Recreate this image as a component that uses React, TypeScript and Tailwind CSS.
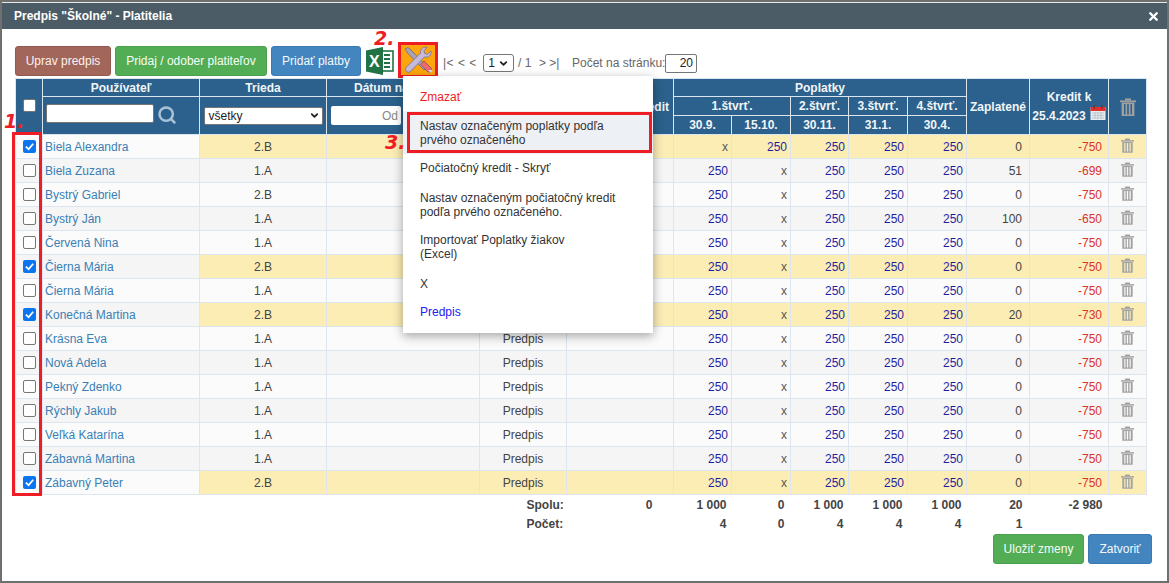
import { ChevronDown, Search, X } from "lucide-react";

type Row = {
  name: string;
  cls: string;
  checked?: boolean;
  first: string;
  second: string;
  paid: number;
  credit: number;
};

const rows: Row[] = [
  { name: "Biela Alexandra", cls: "2.B", checked: true, first: "x", second: "250", paid: 0, credit: -750 },
  { name: "Biela Zuzana", cls: "1.A", first: "250", second: "x", paid: 51, credit: -699 },
  { name: "Bystrý Gabriel", cls: "2.B", first: "250", second: "x", paid: 0, credit: -750 },
  { name: "Bystrý Ján", cls: "1.A", first: "250", second: "x", paid: 100, credit: -650 },
  { name: "Červená Nina", cls: "1.A", first: "250", second: "x", paid: 0, credit: -750 },
  { name: "Čierna Mária", cls: "2.B", checked: true, first: "250", second: "x", paid: 0, credit: -750 },
  { name: "Čierna Mária", cls: "1.A", first: "250", second: "x", paid: 0, credit: -750 },
  { name: "Konečná Martina", cls: "2.B", checked: true, first: "250", second: "x", paid: 20, credit: -730 },
  { name: "Krásna Eva", cls: "1.A", first: "250", second: "x", paid: 0, credit: -750 },
  { name: "Nová Adela", cls: "1.A", first: "250", second: "x", paid: 0, credit: -750 },
  { name: "Pekný Zdenko", cls: "1.A", first: "250", second: "x", paid: 0, credit: -750 },
  { name: "Rýchly Jakub", cls: "1.A", first: "250", second: "x", paid: 0, credit: -750 },
  { name: "Veľká Katarína", cls: "1.A", first: "250", second: "x", paid: 0, credit: -750 },
  { name: "Zábavná Martina", cls: "1.A", first: "250", second: "x", paid: 0, credit: -750 },
  { name: "Zábavný Peter", cls: "2.B", checked: true, first: "250", second: "x", paid: 0, credit: -750 },
];

const widths = [27, 157, 127, 153, 87, 107, 58, 59, 58, 59, 59, 63, 79, 38];

const th = "border border-[#dbe5ee] bg-[#2b618c] text-center align-middle font-bold leading-[16px] text-[#f2f5f7] p-0";
const td = "border border-[#dde6ee] px-[5px] p-0 h-6";

function TrashIcon({ className }: { className: string }) {
  return (
    <svg viewBox="0 0 16 18" className={className} fill="currentColor">
      <rect x="0" y="2.4" width="16" height="1.8" />
      <rect x="5" y="0.4" width="6" height="2" />
      <path d="M1.6 4.6h12.800V18H1.600zM4 6v10.400h1.500V6zM7.200 6v10.400h1.600V6zM10.500 6v10.400H12V6z" fillRule="evenodd" />
    </svg>
  );
}

function CalendarIcon() {
  return (
    <svg viewBox="0 0 16 15" className="-mt-[8px] h-[15px] w-4 shrink-0">
      <rect x="0.5" y="2" width="15" height="13" fill="#e6ecef" />
      <rect x="0.5" y="2" width="15" height="4" fill="#e0322a" />
      <rect x="3.5" y="0" width="1.2" height="4" fill="#7a2a2a" />
      <rect x="11.3" y="0" width="1.2" height="4" fill="#7a2a2a" />
      <path d="M2 8h12M2 10.500h12M2 13h12M5 7v7M8 7v7M11 7v7" stroke="#aebcc4" strokeWidth="0.7" />
    </svg>
  );
}

function ExcelIcon() {
  return (
    <svg viewBox="0 0 28 28" className="h-7 w-7">
      <rect x="12" y="4" width="15" height="20" fill="#fff" stroke="#217346" strokeWidth="1.6" />
      <path d="M18 8h6M18 12h6M18 16h6M18 20h6" stroke="#217346" strokeWidth="2" />
      <path d="M0 3.500 17 0v28L0 24.500z" fill="#217346" />
      <text x="3" y="20" fontSize="16" fontWeight="bold" fill="#fff" fontFamily="Liberation Sans, sans-serif">X</text>
    </svg>
  );
}

function ToolsIcon() {
  return (
    <svg viewBox="0 0 32 28" className="h-7 w-8">
      <path d="M3 3 6 1.500 9 4l16 17-3 3L6 7.500z" fill="#a9a3b8" stroke="#6f6a82" strokeWidth="0.8" />
      <path d="M25 1.500c-3-1-7 1-6.500 5.500L4 21.500a3 3 0 0 0 4.200 4.200L22.500 11c4 1 7.500-2 6.500-6l-3.500 3.300-3-1L22 4.500z" fill="#c8b9da" stroke="#7d7590" strokeWidth="0.9" />
      <path d="m18.500 18.500 3.500-3.500 7 7a2.500 2.500 0 0 1-3.500 3.500z" fill="#ee6a70" stroke="#8d4a5a" strokeWidth="0.8" />
      <path d="m26 24 5 0-2.500 3z" fill="#d5d9e2" />
    </svg>
  );
}

function Check({ checked }: { checked?: boolean }) {
  return (
    <div
      className={
        checked
          ? "mx-auto flex h-[13px] w-[13px] items-center justify-center rounded-[2px] bg-[#0a75f0]"
          : "mx-auto h-[13px] w-[13px] rounded-[2px] border border-[#767676] bg-white"
      }
    >
      {checked && (
        <svg viewBox="0 0 12 12" className="h-[11px] w-[11px]">
          <path d="M2 6.200 5 9l5-6" fill="none" stroke="#fff" strokeWidth="2" />
        </svg>
      )}
    </div>
  );
}

function Amount({ value, bg }: { value: string; bg: string }) {
  return (
    <td className={`${td} ${bg} pr-[3px] text-right ${value === "x" ? "text-[#555]" : "text-[#1f1f9e]"}`}>{value}</td>
  );
}

function MenuItem({ children, color = "text-[#333]", extra = "" }: { children: React.ReactNode; color?: string; extra?: string }) {
  return <div className={`px-[17px] py-[7px] leading-[14px] ${color} ${extra}`}>{children}</div>;
}

function Mark({ text, className }: { text: string; className: string }) {
  return (
    <span className={`absolute text-[19px] leading-none font-bold italic text-[#ee1c25] font-['DejaVu_Sans',sans-serif] ${className}`}>
      {text}
    </span>
  );
}

export default function App() {
  return (
    <div className="h-[583px] w-[1169px] overflow-hidden bg-[#6f6f6f] p-[2px] font-['Liberation_Sans',Arial,sans-serif] text-[12px] text-[#444]">
      <div className="relative flex h-[579px] flex-col bg-white">
        <div className="h-[1px] shrink-0 bg-[#e8e8e8]" />
        <div className="flex h-[26px] shrink-0 items-center justify-between bg-[#4b5c66] pr-[7px] pl-[12px] text-[12px] font-bold text-white">
          <span>Predpis "Školné" - Platitelia</span>
          <X className="h-[13px] w-[13px]" strokeWidth={4.5} />
        </div>

        <div className="flex flex-1 flex-col pt-[17px] pr-[15px] pl-[13px]">
          <div className="flex h-[30px] items-center">
            <button className="h-[30px] w-[96px] rounded-[3px] border border-[#94594e] bg-[#a3665a] text-[#f9f2ef]">Uprav predpis</button>
            <button className="ml-1 h-[30px] w-[152px] rounded-[3px] border border-[#4aa14d] bg-[#52ad55] text-[#f7fcf7]">Pridaj / odober platiteľov</button>
            <button className="ml-1 h-[30px] w-[90px] rounded-[3px] border border-[#3a7ab2] bg-[#4285bf] text-[#f5f9fd]">Pridať platby</button>
            <div className="ml-[5px]"><ExcelIcon /></div>
            <div className="-mt-[2px] ml-1 flex h-9 w-10 items-center justify-center border-[3px] border-[#ee1c25] bg-[#fca60b]">
              <ToolsIcon />
            </div>
            <div className="mt-[4px] ml-[5px] flex items-center whitespace-nowrap text-[#666]">
              <span className="w-[35px] tracking-[0.5px]">|&lt; &lt; &lt;</span>
              <div className="ml-[5px] flex h-[18px] w-[31px] items-center justify-center gap-[3px] rounded-[3px] border border-[#767676] text-[#222]">
                1<ChevronDown className="h-[11px] w-[11px]" strokeWidth={4} />
              </div>
              <span className="ml-[4px] w-[13px]">/ 1</span>
              <span className="ml-[8px] w-[20px]">&gt; &gt;|</span>
              <span className="ml-[13px] w-[93px]">Počet na stránku:</span>
              <div className="flex h-[19px] w-[32px] items-center justify-end rounded-[2px] border border-[#767676] pr-[3px] text-[#222]">20</div>
            </div>
          </div>

          <table className="mt-[2px] w-[1131px] table-fixed border-collapse">
            <colgroup>
              {widths.map((w, i) => (
                <col key={i} style={{ width: w }} />
              ))}
            </colgroup>
            <thead>
              <tr className="h-[18px]">
                <th rowSpan={3} className={th}>
                  <div className="-mt-[3px]"><Check /></div>
                </th>
                <th className={th}>Používateľ</th>
                <th className={th}>Trieda</th>
                <th className={th}>Dátum narodenia</th>
                <th className={th}></th>
                <th rowSpan={3} className={`${th} pr-[4px] text-right`}>Počiat. kredit</th>
                <th colSpan={5} className={th}>Poplatky</th>
                <th rowSpan={3} className={th}>Zaplatené</th>
                <th rowSpan={3} className={th}>
                  <div className="leading-[19px]">Kredit k</div>
                  <div className="flex items-center justify-center gap-[4px] leading-[19px]">25.4.2023<CalendarIcon /></div>
                </th>
                <th rowSpan={3} className={th}>
                  <TrashIcon className="mx-auto h-[18px] w-4 text-[#a0a0a0]" />
                </th>
              </tr>
              <tr className="h-[19px]">
                <th rowSpan={2} className={th}>
                  <div className="-mt-[5px] flex items-center gap-[3px] pl-[3px]">
                    <div className="h-[19px] w-[108px] rounded-[2px] border border-[#767676] bg-white" />
                    <Search className="mt-[3px] h-5 w-5 text-[#a9c2d6]" strokeWidth={3} />
                  </div>
                </th>
                <th rowSpan={2} className={th}>
                  <div className="mx-auto flex h-[18px] w-[119px] items-center justify-between rounded-[2px] border border-[#767676] bg-white pr-[2px] pl-1 font-normal text-[#222]">
                    všetky<ChevronDown className="h-[11px] w-[11px]" strokeWidth={4} />
                  </div>
                </th>
                <th rowSpan={2} className={th}>
                  <div className="ml-[4px] flex h-[19px] w-[70px] items-center justify-end rounded-[2px] bg-white pr-[3px] font-normal text-[#888]">Od</div>
                </th>
                <th rowSpan={2} className={th}></th>
                <th colSpan={2} className={th}>1.štvrť.</th>
                <th className={th}>2.štvrť.</th>
                <th className={th}>3.štvrť.</th>
                <th className={th}>4.štvrť.</th>
              </tr>
              <tr className="h-[19px]">
                <th className={th}>30.9.</th>
                <th className={th}>15.10.</th>
                <th className={th}>30.11.</th>
                <th className={th}>31.1.</th>
                <th className={th}>30.4.</th>
              </tr>
            </thead>
            <tbody>
              {rows.map((r, i) => {
                const base = i % 2 === 0 ? "bg-[#fbfbfb]" : "bg-[#f5f5f5]";
                const bg = r.checked ? "bg-[#fcedb5]" : base;
                return (
                  <tr key={i} className="h-6">
                    <td className={`${td} ${base}`}><Check checked={r.checked} /></td>
                    <td className={`${td} ${base} text-[#3a7fb5]`}>
                      <span className="-ml-[3px]">{r.name}</span>
                    </td>
                    <td className={`${td} ${bg} text-center`}>{r.cls}</td>
                    <td className={`${td} ${bg}`}></td>
                    <td className={`${td} ${bg} text-center`}>{(i >= 8) && "Predpis"}</td>
                    <td className={`${td} ${bg}`}></td>
                    <Amount value={r.first} bg={bg} />
                    <Amount value={r.second} bg={bg} />
                    <Amount value="250" bg={bg} />
                    <Amount value="250" bg={bg} />
                    <Amount value="250" bg={bg} />
                    <td className={`${td} ${bg} pr-[7px] text-right`}>{r.paid}</td>
                    <td className={`${td} ${bg} pr-[6px] text-right text-[#d9342b]`}>{r.credit}</td>
                    <td className={`${td} ${bg}`}>
                      <TrashIcon className="mx-auto -mt-[2px] h-[15px] w-[13px] text-[#a3a3a3]" />
                    </td>
                  </tr>
                );
              })}
              <tr className="h-[20px] font-bold">
                <td colSpan={4}></td>
                <td className="pl-[47px]">Spolu:</td>
                <td className="pr-[21px] text-right">0</td>
                <td className="pr-[5px] text-right">1 000</td>
                <td className="pr-[6px] text-right">0</td>
                <td className="pr-[5px] text-right">1 000</td>
                <td className="pr-[5px] text-right">1 000</td>
                <td className="pr-[5px] text-right">1 000</td>
                <td className="pr-[7px] text-right">20</td>
                <td className="pr-[6px] text-right">-2 980</td>
                <td></td>
              </tr>
              <tr className="h-[19px] font-bold">
                <td colSpan={4}></td>
                <td className="pl-[47px]">Počet:</td>
                <td></td>
                <td className="pr-[5px] text-right">4</td>
                <td className="pr-[6px] text-right">0</td>
                <td className="pr-[5px] text-right">4</td>
                <td className="pr-[5px] text-right">4</td>
                <td className="pr-[5px] text-right">4</td>
                <td className="pr-[7px] text-right">1</td>
                <td></td>
                <td></td>
              </tr>
            </tbody>
          </table>

          <div className="flex justify-end gap-1">
            <button className="h-[30px] w-[91px] rounded-[3px] border border-[#4aa14d] bg-[#52ad55] text-[#f7fcf7]">Uložiť zmeny</button>
            <button className="h-[30px] w-[64px] rounded-[3px] border border-[#3a7ab2] bg-[#4285bf] text-[#f5f9fd]">Zatvoriť</button>
          </div>
        </div>

        <div className="absolute top-[74px] left-[401px] w-[250px] bg-white py-[7px] shadow-[0_3px_10px_rgba(0,0,0,0.35)]">
          <MenuItem color="text-[#f01c1c]">Zmazať</MenuItem>
          <div className="bg-[#edf0f5] pt-[1px]"><MenuItem>Nastav označeným poplatky podľa<br />prvého označeného</MenuItem></div>
          <MenuItem extra="mb-[2px]">Počiatočný kredit - Skryť</MenuItem>
          <MenuItem>Nastav označeným počiatočný kredit<br />podľa prvého označeného.</MenuItem>
          <MenuItem extra="mb-[2px]">Importovať Poplatky žiakov<br />(Excel)</MenuItem>
          <MenuItem>X</MenuItem>
          <MenuItem color="text-[#2020f0]">Predpis</MenuItem>
        </div>

        {/* red annotations over the screenshot */}
        <div className="absolute top-[110px] left-[405px] h-[41px] w-[245px] border-[3px] border-[#ee1c25]" />
        <div className="absolute top-[130px] left-[10px] h-[364px] w-[30px] border-[3px] border-[#ee1c25]" />
        <Mark text="1." className="top-[110px] left-[2px]" />
        <Mark text="2." className="top-[27px] left-[372px]" />
        <Mark text="3." className="top-[131px] left-[383px]" />
      </div>
    </div>
  );
}
